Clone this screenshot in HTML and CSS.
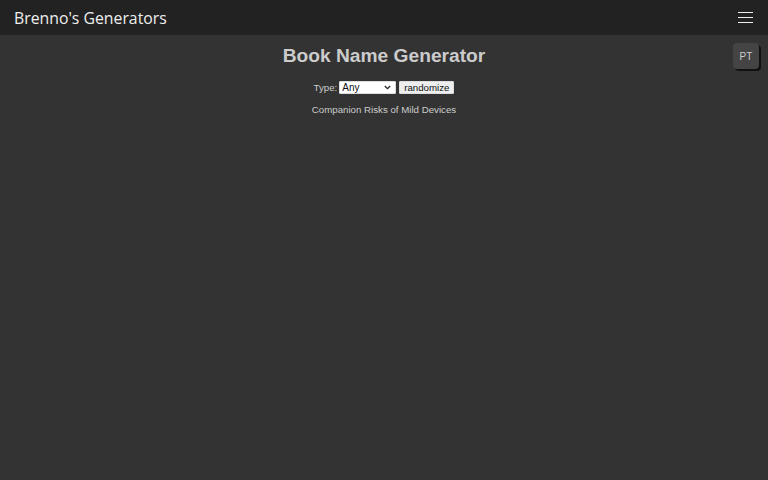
FILE: index.html
```html
<!DOCTYPE html>
<html>
<head>
<meta charset="utf-8">
<link rel="stylesheet" href="styles.css">
</head>
<body>
<nav class="navbar">
  <span class="brand">Brenno's Generators</span>
  <button class="menu" aria-label="menu">
    <svg width="15" height="11" viewBox="0 0 15 11"><path d="M0 0.5h15M0 5.5h15M0 10.5h15" stroke="#eee" stroke-width="1"/></svg>
  </button>
</nav>
<main class="content">
  <button class="lang">PT</button>
  <h1 class="title">Book Name Generator</h1>
  <div class="controls">
    <label>Type:</label>
    <span class="select-wrap">
      <select class="type"><option>Any</option></select>
      <svg class="chev" width="7" height="5" viewBox="0 0 7 5"><path d="M0.8 1l2.7 2.6L6.2 1" fill="none" stroke="#222" stroke-width="1.3"/></svg>
    </span>
    <button class="rand">randomize</button>
  </div>
  <p class="result">Companion Risks of Mild Devices</p>
</main>
</body>
</html>
```
FILE: styles.css
```css
html, body { margin: 0; padding: 0; }
body { background: #333; height: 480px; font-family: "Liberation Sans", Arial, sans-serif; color: #ccc; overflow: hidden; }
.navbar { height: 35px; background: #222; display: flex; align-items: center; justify-content: space-between; padding: 0 15px 0 14px; box-sizing: border-box; }
.brand { font-family: "Open Sans", sans-serif; font-size: 15.8px; color: #eee; }
.menu { background: none; border: none; padding: 0; width: 15px; height: 11px; display: flex; margin-top: 0; }
.content { position: relative; text-align: center; padding-top: 9px; }
.lang { position: absolute; right: 9px; top: 8px; width: 26px; height: 26px; border: none; border-radius: 4px; background: #444; color: #ccc; font-family: "Liberation Sans", sans-serif; font-size: 10px; box-shadow: 2px 2px 0 #111; padding: 0; }
.title { margin: 0; font-size: 19.2px; font-weight: bold; color: #ccc; line-height: 24px; }
.controls { margin-top: 13px; display: flex; justify-content: center; align-items: center; gap: 3px; font-size: 9.7px; }
.controls label { color: #ccc; margin-right: -1px; }
.select-wrap { position: relative; display: inline-flex; }
.type { appearance: none; -webkit-appearance: none; width: 57px; height: 13px; font-size: 10px; font-family: "Liberation Sans", sans-serif; padding: 0 2px; border: 1px solid #ddd; border-radius: 1px; background: #fff; color: #111; line-height: 11px; }
.chev { position: absolute; right: 5px; top: 4px; pointer-events: none; }
.rand { height: 13px; font-size: 9.7px; font-family: "Liberation Sans", sans-serif; padding: 0 4px; border: 1px solid #ddd; border-radius: 1px; background: #eee; color: #111; line-height: 11px; }
.result { margin: 10px 0 0; font-size: 9.7px; color: #ccc; }
```
